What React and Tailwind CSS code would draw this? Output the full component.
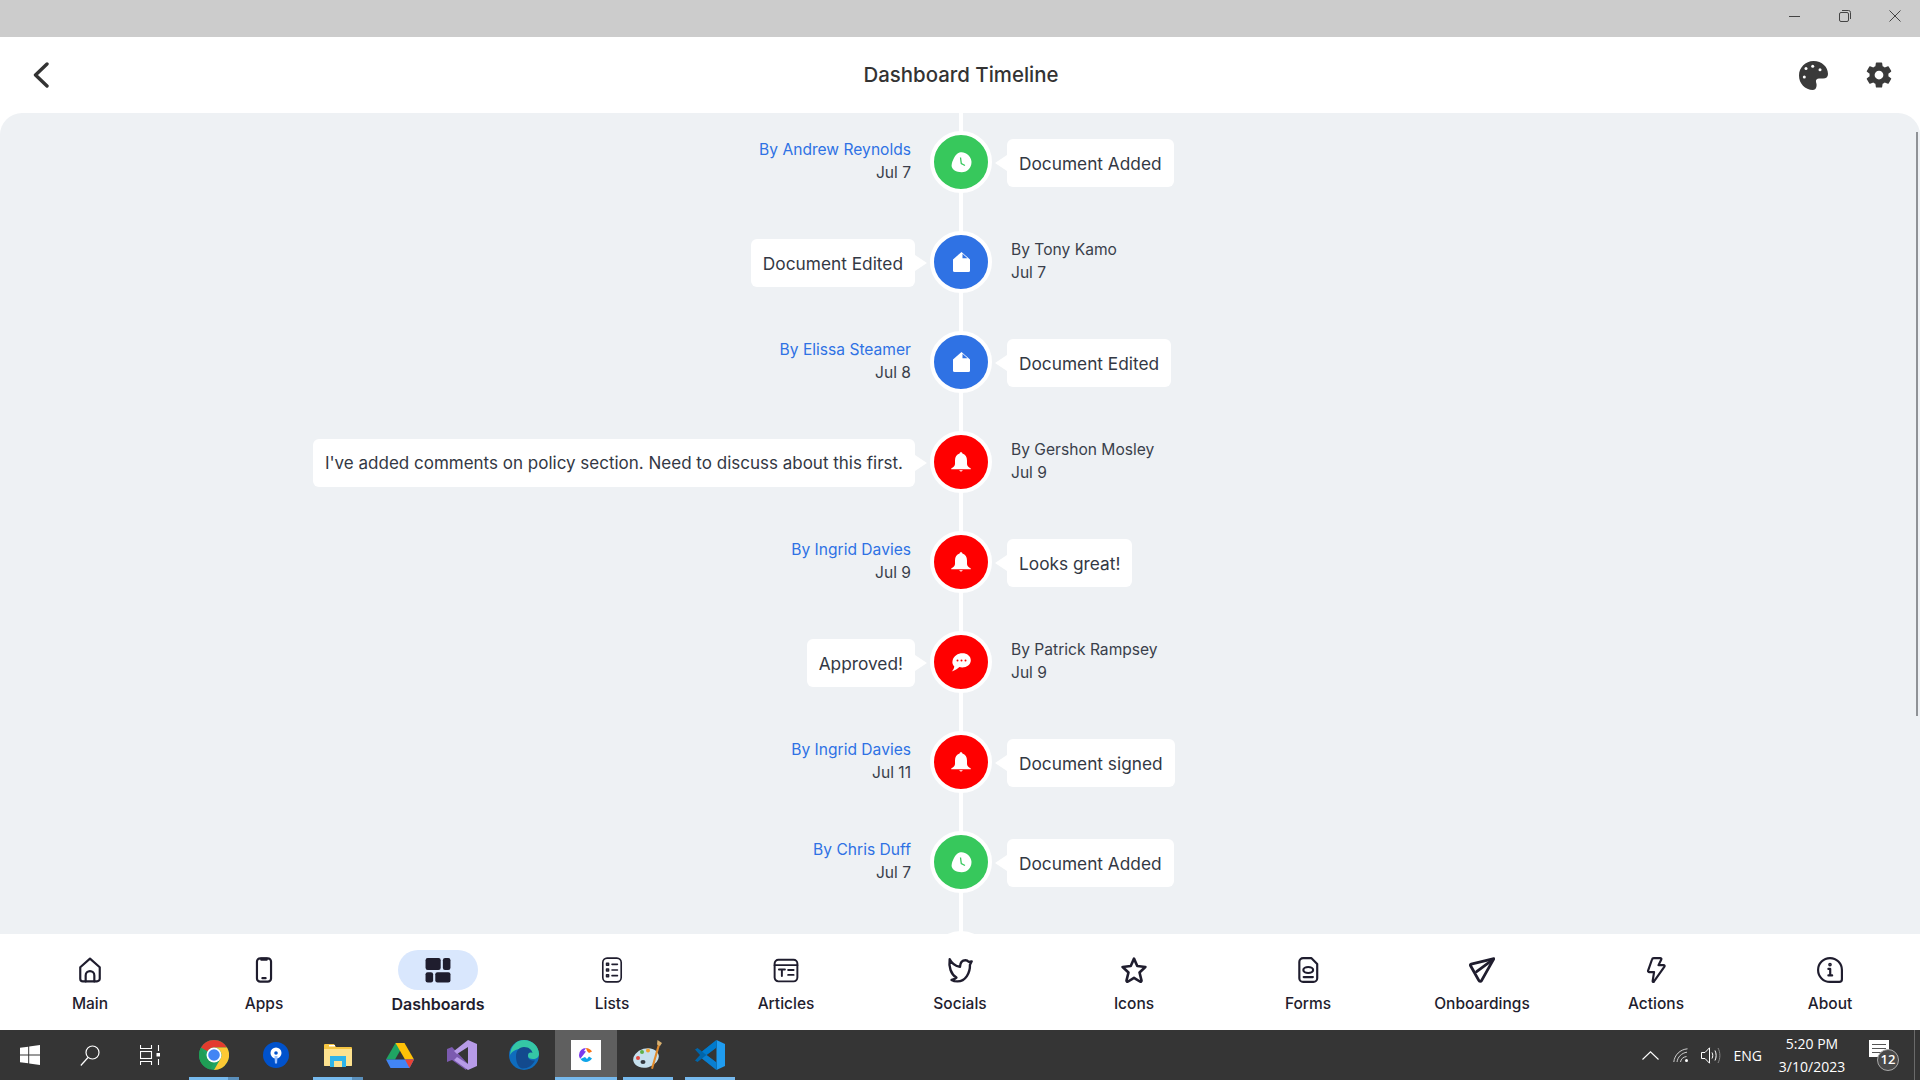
import React from "react";
import { IoSettingsSharp } from "react-icons/io5";

const events = [
  { author: "By Andrew Reynolds", date: "Jul 7", text: "Document Added", kind: "added", authorLeft: true },
  { author: "By Tony Kamo", date: "Jul 7", text: "Document Edited", kind: "edited", authorLeft: false },
  { author: "By Elissa Steamer", date: "Jul 8", text: "Document Edited", kind: "edited", authorLeft: true },
  { author: "By Gershon Mosley", date: "Jul 9", text: "I've added comments on policy section. Need to discuss about this first.", kind: "bell", authorLeft: false, long: true },
  { author: "By Ingrid Davies", date: "Jul 9", text: "Looks great!", kind: "bell", authorLeft: true },
  { author: "By Patrick Rampsey", date: "Jul 9", text: "Approved!", kind: "chat", authorLeft: false },
  { author: "By Ingrid Davies", date: "Jul 11", text: "Document signed", kind: "bell", authorLeft: true },
  { author: "By Chris Duff", date: "Jul 7", text: "Document Added", kind: "added", authorLeft: true },
];

const kindColors = {
  added: "bg-[#37c85c]",
  edited: "bg-[#2f72e4]",
  bell: "bg-[#ff0000]",
  chat: "bg-[#ff0000]",
};

function EventIcon({ kind }) {
  if (kind === "added") {
    return (
      <svg width="21" height="21" viewBox="0 0 21 21">
        <path d="M8.5 .6C13.5-.8 19.5 3 20.4 9c.7 6-3.4 11.2-9.6 11.3C5.500 20.400 .3 17.500.6 13.500 1 9.500 4 1.800 8.500.6z" fill="#fff" />
        <path d="M9.500 5.500l.8 6 3.700 2" fill="none" stroke="#37c85c" strokeWidth="1.300" />
      </svg>
    );
  }
  if (kind === "edited") {
    return (
      <svg width="17" height="20" viewBox="0 0 17 20">
        <path d="M8.500 0L17 7.500V18.500a1.500 1.500 0 0 1-1.500 1.500H1.500A1.500 1.500 0 0 1 0 18.500V7.500z" fill="#fff" />
        <path d="M9.500 1.800L14.500 6.300H9.500z" fill="#2f72e4" />
      </svg>
    );
  }
  if (kind === "bell") {
    return (
      <svg width="20" height="20" viewBox="0 0 20 20">
        <path d="M10 .3c.8 0 1.300.5 1.400 1.300C14.500 2.300 16 5 16 8.500V12c0 2 1.500 3 3.800 4.500v.8H.2v-.8C2.500 15 4 14 4 12V8.500C4 5 5.500 2.300 8.600 1.600 8.700.8 9.200.3 10 .3z" fill="#fff" />
        <path d="M8 18.300h4L10 19.800z" fill="#fff" />
      </svg>
    );
  }
  return (
    <svg width="20" height="19" viewBox="0 0 20 19">
      <path d="M11.500 .3c4.500 0 8.300 2.700 8.300 7 0 4.400-4 7.200-8.600 7.200-1 0-2-.1-2.800-.4-1.800 1.900-4.400 3.400-7.700 4.300 1.400-1.400 2.300-3 2.600-5C1.800 12 .9 9.900 1.600 7.500 2.700 3 6.800.3 11.500.3z" fill="#fff" />
      <circle cx="6.500" cy="7.500" r="1" fill="#ff0000" />
      <circle cx="10.500" cy="7.500" r="1" fill="#ff0000" />
      <circle cx="14.500" cy="7.500" r="1" fill="#ff0000" />
    </svg>
  );
}

function Byline({ author, date, alignRight }) {
  return (
    <div className={alignRight ? "text-right text-[15.600px] leading-[23px]" : "text-left text-[15.600px] leading-[23px]"}>
      <div className={alignRight ? "text-[#2f72e4]" : "text-[#3a3f4b]"}>{author}</div>
      <div className="text-[#3a3f4b]">{date}</div>
    </div>
  );
}

function Bubble({ text, side, long }) {
  return (
    <div className={`relative mt-[2px] flex h-12 items-center rounded-md bg-white px-[12px] pt-[2px] text-[#333844] whitespace-nowrap ${long ? "text-[17px]" : "text-[17.300px]"}`}>
      {text}
      {side === "right" && (
        <span className="absolute left-[-12px] top-[16px] h-0 w-0 border-y-[8px] border-r-[12px] border-y-transparent border-r-white" />
      )}
      {side === "left" && (
        <span className="absolute right-[-12px] top-[16px] h-0 w-0 border-y-[8px] border-l-[12px] border-y-transparent border-l-white" />
      )}
    </div>
  );
}

function TimelineRow({ event }) {
  return (
    <div className="grid h-[100px] grid-cols-[1fr_62px_1fr] items-center">
      <div className="flex justify-end pr-[15px]">
        {event.authorLeft ? (
          <div className="pr-[4px] -translate-y-[1px]">
            <Byline author={event.author} date={event.date} alignRight />
          </div>
        ) : (
          <Bubble text={event.text} side="left" long={event.long} />
        )}
      </div>
      <div className="relative flex h-full items-center justify-center">
        <span className="absolute inset-y-0 left-1/2 w-[4px] -translate-x-1/2 bg-white" />
        <div className={`relative flex h-[62px] w-[62px] items-center justify-center rounded-full border-[4px] border-white ${kindColors[event.kind]}`}>
          <EventIcon kind={event.kind} />
        </div>
      </div>
      <div className="flex justify-start pl-[15px]">
        {event.authorLeft ? (
          <Bubble text={event.text} side="right" />
        ) : (
          <div className="pl-[4px] -translate-y-[1px]">
            <Byline author={event.author} date={event.date} />
          </div>
        )}
      </div>
    </div>
  );
}

const stroke = { fill: "none", stroke: "#1f1d2e", strokeWidth: 2, strokeLinecap: "round", strokeLinejoin: "round" };

const navItems = [
  {
    label: "Main",
    icon: (
      <g {...stroke}>
        <path d="M12 1.500L21 9.500V20a2.500 2.500 0 0 1-2.500 2.500h-13A2.500 2.500 0 0 1 3 20V9.500z" />
        <path d="M8 22.500V17a4 4 0 0 1 8 0v5.500" />
      </g>
    ),
  },
  {
    label: "Apps",
    icon: (
      <g {...stroke}>
        <rect x="5.500" y="1.200" width="13" height="21.600" rx="3" />
        <path d="M9.500 1.500h5v1h-5z" />
        <path d="M10.500 19.500h3" />
      </g>
    ),
  },
  {
    label: "Dashboards",
    active: true,
    icon: (
      <g fill="#1f1d2e">
        <rect x="0.500" y="1" width="14" height="11" rx="2" />
        <rect x="16.500" y="1" width="7" height="11" rx="2" />
        <rect x="0.500" y="14" width="7" height="9.500" rx="2" />
        <rect x="9.500" y="14" width="14" height="9.500" rx="2" />
      </g>
    ),
  },
  {
    label: "Lists",
    icon: (
      <g {...stroke} strokeWidth="1.500">
        <rect x="3.500" y="1" width="17" height="22" rx="4" />
        <rect x="7" y="5.800" width="1.800" height="1.800" />
        <rect x="7" y="11.100" width="1.800" height="1.800" />
        <rect x="7" y="16.400" width="1.800" height="1.800" />
        <path d="M12 6.800h5M12 12h5M12 17.200h5" />
      </g>
    ),
  },
  {
    label: "Articles",
    icon: (
      <g {...stroke} strokeWidth="1.800">
        <rect x="1.500" y="2.500" width="21" height="20" rx="3.500" />
        <path d="M1.500 7.500h21" />
        <path d="M5.500 11.500h5.500M8.200 11.500v6M14 12h5M14 16.500h5" />
      </g>
    ),
  },
  {
    label: "Socials",
    icon: (
      <g {...stroke} strokeWidth="2.200">
        <path d="M2.500 2c2 4 4.800 6.300 9.500 7 .2-3.200 1.700-6 5-6 1.400 0 2.300.6 3 1.500l2.800-.5-1.600 3.200c.2 7.300-4 15.300-11.500 15.300-2.300 0-4-.4-5.500-1.300 1.800-.3 3.200-.9 4.500-2.200C3.500 16 1.500 9 2.500 2z" />
      </g>
    ),
  },
  {
    label: "Icons",
    icon: (
      <path {...stroke} strokeWidth="2.400" d="M12 1.500l3 6.800 7.500.9-5.400 5.100 1.800 7.300c.2 1-.7 1.500-1.500 1L12 19.200l-5.400 3.400c-.8.500-1.700 0-1.500-1l1.800-7.300L1.500 9.200 9 8.300z" />
    ),
  },
  {
    label: "Forms",
    icon: (
      <g {...stroke}>
        <path d="M7.500 1h7.500L20.500 6.500V19.500a3.500 3.500 0 0 1-3.500 3.500H7.500A3.500 3.500 0 0 1 4 19.500V4.500A3.500 3.500 0 0 1 7.500 1z" />
        <ellipse cx="12.200" cy="12" rx="4.500" ry="2.800" />
        <path d="M8 18.500h8.500" />
      </g>
    ),
  },
  {
    label: "Onboardings",
    icon: (
      <g {...stroke} strokeWidth="2.600">
        <path d="M23 1.500L2 6.500c-1 .3-.8 1.200-.4 1.800l7.300 13c.8 1.500 2 1.500 2.800.3z" />
        <path d="M22 2.500L7 13.500" />
      </g>
    ),
  },
  {
    label: "Actions",
    icon: (
      <path {...stroke} d="M10 1h5.800c1 0 1.500.8 1 1.500L14.300 7.500H19c.8 0 1.200.8.800 1.400L10 22.800c-.4.500-1.200.2-1.100-.5l1.300-8.300H5.800c-.8 0-1.300-.7-1.100-1.400L8.300 2.300C8.500 1.500 9.200 1 10 1z" />
    ),
  },
  {
    label: "About",
    icon: (
      <g {...stroke}>
        <path d="M12 1a11 11 0 0 1 11 11v8.500a2.500 2.500 0 0 1-2.500 2.500H12a11 11 0 0 1 0-22z" />
        <path d="M10.500 11h1.700v6M10.500 17h3.500" />
        <circle cx="12" cy="7" r=".7" />
      </g>
    ),
  },
];

function BottomNav() {
  return (
    <nav className="grid h-[96px] shrink-0 grid-cols-11 bg-white px-[3px]">
      {navItems.map((item) => (
        <div key={item.label} className="flex flex-col items-center pt-[16px]">
          <div className={`flex h-10 w-20 items-center justify-center rounded-[20px] ${item.active ? "bg-[#d9e7fd]" : ""}`}>
            <svg width="26" height="26" viewBox="0 0 24 24">
              {item.icon}
            </svg>
          </div>
          <span className={`leading-[28px] text-[#1f1d2e] ${item.active ? "text-[16px] font-semibold" : "text-[15.500px] font-medium"}`}>
            {item.label}
          </span>
        </div>
      ))}
    </nav>
  );
}

const ChromeIcon = () => (
  <svg width="30" height="30" viewBox="0 0 30 30">
    <circle cx="15" cy="15" r="15" fill="#1fa463" />
    <path d="M15 0A15 15 0 0 1 28 7.500H15A7.500 7.500 0 0 0 8.500 11.300L2 7.500A15 15 0 0 1 15 0z" fill="#e33b2e" />
    <path d="M28 7.500A15 15 0 0 1 15 30L21.500 18.800A7.500 7.500 0 0 0 21.500 11.300 7.500 7.500 0 0 0 15 7.500z" fill="#fcc934" />
    <path d="M2 7.500L8.500 18.800A7.500 7.500 0 0 0 15 22.500L11 29.500A15 15 0 0 1 2 7.500z" fill="#1f9d55" />
    <circle cx="15" cy="15" r="7.500" fill="#fff" />
    <circle cx="15" cy="15" r="5.800" fill="#4285f4" />
  </svg>
);

const SourcetreeIcon = () => (
  <svg width="26" height="26" viewBox="0 0 26 26">
    <circle cx="13" cy="13" r="13" fill="#0052cc" />
    <circle cx="13" cy="11" r="5.500" fill="#fff" />
    <circle cx="13" cy="11" r="1.800" fill="#0052cc" />
    <path d="M11.500 14h3l-.5 7.500h-2z" fill="#9cc2ff" />
  </svg>
);

const ExplorerIcon = () => (
  <svg width="28" height="23" viewBox="0 0 28 23">
    <path d="M1 0h9l2 3h15a1 1 0 0 1 1 1v17a1 1 0 0 1-1 1H1a1 1 0 0 1-1-1V1a1 1 0 0 1 1-1z" fill="#f5c542" />
    <path d="M0 5h28v16a1 1 0 0 1-1 1H1a1 1 0 0 1-1-1z" fill="#fde28f" />
    <rect x="5" y="1" width="6" height="1.500" fill="#fff" />
    <path d="M6 12h16v11h-4v-6h-8v6H6z" fill="#2fb4e9" />
    <rect x="10" y="17" width="8" height="6" fill="#fde28f" />
  </svg>
);

const DriveIcon = () => (
  <svg width="28" height="25" viewBox="0 0 28 25">
    <path d="M9.500 0h9L9 16.500H0z" fill="#1fa463" />
    <path d="M18.500 0L28 16.500h-9L9.500 0z" fill="#ffc107" />
    <path d="M5 16.500h23L23.500 25H4.500L0 16.500z" fill="#4285f4" />
    <path d="M19 16.500h9L23.500 25z" fill="#ea4335" />
  </svg>
);

const StudioIcon = () => (
  <svg width="30" height="30" viewBox="0 0 30 30">
    <path d="M0 9l5-2 16 17-2 6-14-10-5 2z" fill="#7c5bb0" />
    <path d="M21 0l9 4v22l-9 4-14-10 3-3 11 7V7L10 14 7 11z" fill="#b79be8" />
  </svg>
);

const EdgeIcon = () => (
  <svg width="30" height="30" viewBox="0 0 30 30">
    <circle cx="15" cy="15" r="15" fill="#0f6cbd" />
    <path d="M15 0c8.500 0 15 6.500 15 14 0 3-2.500 5-6 5-3 0-5-1-5-2.500 0-3-2-7.500-8-7.500-4 0-8 2.500-10 6C1.500 6 7.500 0 15 0z" fill="#35c7a5" />
    <path d="M15 7c5 0 8 3 8.500 6-2.500-1-4.500-.5-4.500 3 0 4 4 5 7 4.500-2.500 5-7 8-12 8-4.500 0-7-6-7-12C7 11 10 7 15 7z" fill="#134a8e" />
  </svg>
);

const AppLogoIcon = () => (
  <div className="flex h-[30px] w-[30px] items-center justify-center bg-white">
    <svg width="16" height="16" viewBox="0 0 16 16">
      <path d="M8 1a7 7 0 0 0-7 7c0 1.500.5 2.800 1.300 3.800L8 4.500 6 4z" fill="#7c3aed" />
      <path d="M8 1c2.500 0 4.500 1.300 6 3.500L11 6 9 4z" fill="#f97316" />
      <path d="M2.500 12c1.300 1.800 3.300 3 5.500 3s4.500-1.200 6-3.500l-3-2-2 2.500-2-2z" fill="#0ea5e9" />
    </svg>
  </div>
);

const PaintIcon = () => (
  <svg width="30" height="30" viewBox="0 0 30 30">
    <ellipse cx="13" cy="18" rx="13" ry="9.500" transform="rotate(-15 13 18)" fill="#c6e0ee" />
    <circle cx="5" cy="18" r="2" fill="#e5483f" />
    <circle cx="9" cy="12" r="2" fill="#5fb04a" />
    <circle cx="15" cy="10.500" r="2" fill="#f0a030" />
    <ellipse cx="10" cy="22" rx="2.500" ry="2" fill="#33383f" />
    <path d="M25 4l2 1-7 24-2-.5z" fill="#e08a2c" />
    <path d="M24.500 0l4.500 3-2 3-3-1.500z" fill="#d8b070" />
  </svg>
);

const VsCodeIcon = () => (
  <svg width="30" height="30" viewBox="0 0 30 30">
    <path d="M21.500 0L30 4v22l-8.500 4z" fill="#1f9cf0" />
    <path d="M21.500 0v7.500L11.500 15l10 7.500V30L7 18.500 2.500 22 0 20.500 5 15 0 9.500 2.500 8 7 11.500z" fill="#0065a9" />
    <path d="M21.500 0v7.500L11.500 15 7 11.500z" fill="#007acc" />
    <path d="M21.500 30v-7.500L11.500 15 7 18.500z" fill="#0a7fd0" />
  </svg>
);

const taskApps = [
  { key: "chrome", icon: <ChromeIcon />, bar: "split" },
  { key: "sourcetree", icon: <SourcetreeIcon /> },
  { key: "explorer", icon: <ExplorerIcon />, bar: "split" },
  { key: "drive", icon: <DriveIcon /> },
  { key: "studio", icon: <StudioIcon /> },
  { key: "edge", icon: <EdgeIcon /> },
  { key: "logo", icon: <AppLogoIcon />, bar: "full", active: true },
  { key: "paint", icon: <PaintIcon />, bar: "plain" },
  { key: "code", icon: <VsCodeIcon />, bar: "plain" },
];

function Taskbar() {
  return (
    <div className="flex h-[50px] shrink-0 items-stretch bg-[#353535] font-['Open_Sans',sans-serif] text-white">
      <div className="flex w-[60px] items-center justify-center">
        <svg width="20" height="20" viewBox="0 0 20 20" fill="#fff">
          <path d="M0 2.800L8.200 1.700V9.500H0zM9.200 1.500L20 0V9.500H9.200zM0 10.500H8.200V18.300L0 17.200zM9.200 10.500H20V20L9.200 18.500z" />
        </svg>
      </div>
      <div className="flex w-[60px] items-center justify-center">
        <svg width="20" height="21" viewBox="0 0 20 21" fill="none" stroke="#fff" strokeWidth="1.200">
          <circle cx="12.500" cy="7.500" r="6.500" />
          <path d="M8 12.500L.8 20.500" />
        </svg>
      </div>
      <div className="mr-[3px] flex w-[60px] items-center justify-center">
        <svg width="20" height="20" viewBox="0 0 20 20" fill="none" stroke="#fff" strokeWidth="1.100">
          <path d="M.5 0v3.500h11V0M.5 20v-3.500h11V20" />
          <rect x=".5" y="6.500" width="11" height="7" />
          <path d="M18.500 0v6M18.500 14v6" />
          <rect x="16.500" y="8" width="3.500" height="3.500" fill="#fff" stroke="none" />
        </svg>
      </div>
      {taskApps.map((app) => (
        <div key={app.key} className={`relative flex w-[62px] items-center justify-center ${app.active ? "bg-[#5f5f5f]" : ""}`}>
          {app.icon}
          {app.bar === "split" && (
            <span className="absolute inset-x-[6px] bottom-0 h-[3px] bg-[#76b9ed]">
              <span className="absolute inset-y-0 right-0 w-[11px] bg-[#5a8fbb]" />
            </span>
          )}
          {app.bar === "plain" && <span className="absolute inset-x-[6px] bottom-0 h-[3px] bg-[#76b9ed]" />}
          {app.bar === "full" && <span className="absolute inset-x-0 bottom-0 h-[3px] bg-[#76b9ed]" />}
        </div>
      ))}

      <div className="ml-auto flex items-center pr-[5px]">
        <svg width="17" height="9" viewBox="0 0 17 9" fill="none" stroke="#fff" strokeWidth="1.100">
          <path d="M.5 8.500L8.500 .8 16.500 8.500" />
        </svg>
        <svg className="ml-[14px]" width="16" height="15" viewBox="0 0 16 15" fill="none" stroke="#d0d0d0" strokeWidth="1">
          <path d="M.8 14C1.500 7 7 1.500 14.500.8M4 14c.7-5 4.500-9 10-9.800M7.500 14c.5-3 2.500-5 6-5.500" />
          <circle cx="13.500" cy="12.500" r="1.500" fill="#fff" stroke="none" />
        </svg>
        <svg className="ml-[12px]" width="20" height="17" viewBox="0 0 20 17" fill="none" stroke="#fff" strokeWidth="1">
          <path d="M.5 5.500H4L8.500 .8V16.200L4 11.500H.5z" />
          <path d="M11 5.500c1 1.800 1 4.200 0 6M14 3.500c1.500 3 1.500 7 0 10" />
          <path d="M17 1c2.500 4.500 2.500 10.500 0 15" stroke="#8a8a8a" />
        </svg>
        <span className="ml-[13px] text-[14px]">ENG</span>
        <div className="ml-[16px] w-[68px] text-center text-[14px] leading-[23px] whitespace-nowrap">
          <div>5:20 PM</div>
          <div>3/10/2023</div>
        </div>
        <div className="relative ml-[23px] h-[30px] w-[32px]">
          <svg className="absolute left-0 top-[0px]" width="20" height="17" viewBox="0 0 20 17">
            <path d="M0 0h20v17H0z" fill="#fff" />
            <path d="M3 4.500h14M3 8.500h14M3 12.500h9" stroke="#555" strokeWidth="1" />
          </svg>
          <span className="absolute left-[8px] top-[9px] flex h-[22px] w-[22px] items-center justify-center rounded-full border border-[#aaa] bg-[#4a4a4a] text-[13px] font-semibold">
            12
          </span>
        </div>
        <span className="ml-[13px] h-full w-px bg-[#6a6a6a]" />
      </div>
    </div>
  );
}

export default function App() {
  return (
    <div className="flex h-screen w-full flex-col overflow-hidden bg-white font-['Inter',sans-serif]">
      <div className="flex h-[37px] shrink-0 items-center justify-end bg-[#cccccc] pb-[5px] pr-[19px]">
        <svg width="12" height="12" viewBox="0 0 12 12" fill="none" stroke="#444" strokeWidth="1">
          <path d="M0 6.500h11" />
        </svg>
        <svg className="ml-[38px]" width="12" height="12" viewBox="0 0 12 12" fill="none" stroke="#444" strokeWidth="1">
          <rect x=".5" y="2.500" width="9" height="9" rx="1.500" />
          <path d="M3 .5h6.500a2 2 0 0 1 2 2V9" />
        </svg>
        <svg className="ml-[38px]" width="12" height="12" viewBox="0 0 12 12" fill="none" stroke="#444" strokeWidth="1">
          <path d="M.5.500l11 11M11.500.500l-11 11" />
        </svg>
      </div>

      <header className="relative flex h-[76px] shrink-0 items-center justify-between pl-[33px] pr-[27px]">
        <svg width="16" height="26" viewBox="0 0 16 26" fill="none" stroke="#333" strokeWidth="3.400" strokeLinecap="round" strokeLinejoin="round">
          <path d="M14 2L2.500 13 14 24" />
        </svg>
        <h1 className="absolute left-0 right-0 pl-[2px] text-center text-[20.400px] font-medium text-[#333]">Dashboard Timeline</h1>
        <div className="flex items-center gap-[37px]">
          <svg width="29" height="29" viewBox="0 0 29 29">
            <path d="M14.500 0C23 0 29 6 29 13c0 3-2 4.500-5 4.500h-4c-2 0-3.500 1.500-3 3.500l.5 2c.5 3-1 6-3.500 6C6 29 0 22.500 0 14.500S6.500 0 14.500 0z" fill="#3a3a3a" />
            <circle cx="5.300" cy="16" r="1.500" fill="#fff" />
            <circle cx="7" cy="7.500" r="1.500" fill="#fff" />
            <circle cx="13.700" cy="5.300" r="1.500" fill="#fff" />
            <circle cx="21" cy="8.800" r="1.500" fill="#fff" />
          </svg>
          <IoSettingsSharp className="text-[28px] text-[#3a3a3a]" />
        </div>
      </header>

      <main className="relative min-h-0 flex-1 overflow-hidden rounded-t-[22px] bg-[#eef1f4] pl-[2px]">
        <div className="-mt-px">
          {events.map((event, i) => (
            <TimelineRow key={i} event={event} />
          ))}
          <div className="grid h-[100px] grid-cols-[1fr_62px_1fr] items-center">
            <div />
            <div className="relative flex h-full items-center justify-center">
              <span className="absolute inset-y-0 left-1/2 w-[4px] -translate-x-1/2 bg-white" />
              <div className="relative h-[62px] w-[62px] rounded-full border-[4px] border-white bg-[#2f72e4]" />
            </div>
            <div />
          </div>
        </div>
        <div className="absolute right-[2px] top-[19px] h-[584px] w-[2px] bg-[#8f9296]" />
      </main>

      <BottomNav />
      <Taskbar />
    </div>
  );
}
